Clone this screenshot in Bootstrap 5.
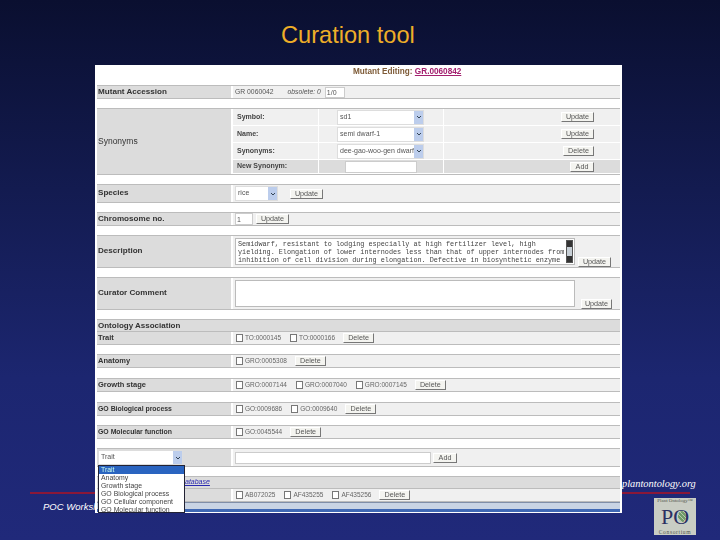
<!DOCTYPE html>
<html lang="en"><head><meta charset="utf-8"><title>Curation tool</title>
<link href="https://cdn.jsdelivr.net/npm/bootstrap@5.3.0/dist/css/bootstrap.min.css" rel="stylesheet">
<style>
html,body{margin:0;width:720px;height:540px;overflow:hidden;background:#1f2a78}
.slide{position:relative;width:720px;height:540px;background:linear-gradient(180deg,#0a0f30 0%,#131b50 35%,#1c2670 70%,#20297a 100%);font-family:"Liberation Sans",Arial,sans-serif;overflow:hidden}
.slide-title{height:65px;margin:0;padding:21px 0 0 281px;font-size:23.6px;line-height:28px;font-weight:400;color:#eeae28;font-family:"Liberation Sans",Arial,sans-serif}
.red-rule{position:absolute;left:30px;top:492px;width:660px;height:2px;background:#8a1838}
.poc{position:absolute;left:43px;top:501px;font:italic 9.5px/12px "Liberation Sans",sans-serif;color:#fff}
.site{position:absolute;left:622px;top:477px;font:italic 10.4px/13px "Liberation Serif",serif;color:#fff}
.po-logo{position:absolute;left:654px;top:498px;width:42px;height:37px;background:#c9cdc4;color:#2a2f62;text-align:center;font-family:"Liberation Serif",serif;overflow:hidden;display:flex;flex-direction:column;justify-content:space-between}
.po-top,.po-bot{line-height:6px;color:#55584f;white-space:nowrap}
.po-top{font-size:5px}
.po-bot{font-size:5.6px;letter-spacing:.6px}
.po-big{font-size:22px;line-height:25px;font-weight:400;position:relative}
.po-leaf{position:absolute;left:24px;top:7px;width:8px;height:11px;border-radius:50%;background:repeating-linear-gradient(45deg,#6f9a68 0 2px,#b7c9ac 2px 3px)}
.shot{position:relative;width:527px;height:448px;margin-left:95px;background:#fff;font-size:8px;color:#444;filter:blur(.42px);padding:0 2px}
.shot-head{height:20px;padding:1px 0 0 256px;font-weight:700;font-size:8.2px;line-height:12px;color:#7d5a36;white-space:nowrap}
.shot-head a{color:#a3206f}
.tr{display:flex;border-top:1px solid #bcbcbc;border-bottom:1px solid #bcbcbc;background:#f0f0f0}
.th{width:136px;flex:none;background:#dcdcdc;padding-left:1px;display:flex;align-items:center;color:#333;border-right:2px solid #fff}
.th-lg{font-size:8.1px;font-weight:700}
.th-syn{font-size:8.5px;font-weight:400}
.th-sm{font-size:7.5px;font-weight:700}
.th-go{font-size:6.9px;font-weight:700}
.td{flex:1;display:flex;align-items:center;min-width:0;white-space:nowrap;padding-left:2px;font-size:6.8px;color:#555}
.gap-row{background:#fff}
.h10{height:10px}.h9{height:9px}
.r14{height:14px}.r18{height:19px}.r31{height:33px}.r66{height:67px}
.full-head{height:12px;background:#dcdcdc;border-top:1px solid #bcbcbc;display:flex;align-items:center;padding-left:1px;font-size:8px;font-weight:700;color:#333;white-space:nowrap}
.full-head a{margin-left:87px;color:#2a2ab0;font-size:7px;font-weight:400;font-style:italic}
.fake-btn{appearance:none;padding:0;height:10px;line-height:8px;font-size:7.2px;font-family:inherit;color:#555;background:#f4f4f0;border:1px solid;border-color:#fff #777 #777 #fff;border-radius:0;flex:none}
.w33{width:33px}.w31{width:31px}.w24{width:24px}
.cb{appearance:none;width:7px;height:8px;margin:0 2px 0 1px;border:1px solid #777;background:#fff;flex:none}
.term{margin-right:8px;font-size:6.5px;color:#666}
.syn-grid{flex:1;display:grid;grid-template-columns:85px 125px 1fr;grid-template-rows:17px 17px 17px 14px;background:#f0f0f0}
.syn-grid>div{display:flex;align-items:center;border-bottom:1px solid #fff;min-width:0}
.syn-l{padding-left:4px;font-weight:700;font-size:7px;color:#444}
.syn-s{padding-left:18px;border-left:1px solid #fff}
.syn-b{justify-content:flex-end;padding-right:26px;border-left:1px solid #fff}
.grey-cell{background:#dcdcdc}
.dd{display:flex;height:15px;background:#fff;border:1px solid #ddd;font-size:7px;color:#555;padding-left:2px;align-items:center;overflow:hidden;flex:none}
.dd span:first-child{flex:1;overflow:hidden;white-space:nowrap}
.dd-arrow{width:9px;height:100%;background:#bccdec;flex:none;display:flex;align-items:center;justify-content:center}
.w87{width:87px}.w43{width:43px}.w85{width:85px}
.txt{appearance:none;height:12px;border:1px solid #ccc;background:#fff;padding:0 1px;font-size:7px;color:#555;border-radius:0;font-family:inherit;flex:none}
.txt-mini{height:11px}
.w72{width:72px}.w18{width:18px}.w20{width:20px}.w196{width:196px}
.area{width:340px;height:27px;flex:none;background:#fff;border:1px solid #bbb;font:6.8px/8.2px "Liberation Mono",monospace;color:#444;padding:1px 9px 0 2px;position:relative;white-space:nowrap;overflow:hidden}
.sbar{position:absolute;right:1px;top:1px;width:7px;bottom:1px;background:#c7cfd6;border:1px solid #555}
.sbar:before,.sbar:after{content:"";position:absolute;left:0;right:0;height:6px;background:#333}
.sbar:before{top:0}.sbar:after{bottom:0}
.btn-low{align-self:flex-end;margin:0 0 0 3px}
.under{height:7px;background:#c9d4e4;border-top:1px solid #7f8ea8}
.under-2{height:3px;background:#3f68b4}
.ddlist{position:absolute;left:3px;top:400px;width:87px;height:48px;background:#fff;border:1px solid #223;font-size:6.9px;line-height:8.1px;color:#444;overflow:hidden;white-space:nowrap}
.ddlist div{padding-left:2px}
.ddlist .sel{background:#2a64c0;color:#cfe}
.ms4{margin-left:4px}.ms6{margin-left:6px}.ms8{margin-left:8px}.ms12{margin-left:12px}.ms14{margin-left:14px}.ms3px{margin-left:3px}.ms2px{margin-left:2px}
</style></head><body>
<div class="slide">
<div class="red-rule"></div>
<div class="poc">POC Worksh</div>
<div class="site">plantontology.org</div>
<div class="po-logo"><div class="po-top">Plant Ontology™</div><div class="po-big">PO<span class="po-leaf"></span></div><div class="po-bot">Consortium</div></div>
<h1 class="slide-title">Curation tool</h1>
<div class="shot">
<div class="shot-head">Mutant Editing: <a href="#">GR.0060842</a></div>
<div class="tr r14"><div class="th th-lg">Mutant Accession</div><div class="td">GR 0060042<i class="ms14">obsolete: 0</i><input class="txt txt-mini w20 ms4" value="1/0"></div></div>
<div class="gap-row h9"></div>
<div class="tr r66"><div class="th th-syn">Synonyms</div>
<div class="syn-grid">
<div class="syn-l">Symbol:</div><div class="syn-s"><div class="dd w87"><span>sd1</span><span class="dd-arrow"><svg width="6" height="4" viewBox="0 0 6 4"><path d="M1 1l2 2 2-2" fill="none" stroke="#345" stroke-width="1"/></svg></span></div></div><div class="syn-b"><button class="fake-btn w33">Update</button></div>
<div class="syn-l">Name:</div><div class="syn-s"><div class="dd w87"><span>semi dwarf-1</span><span class="dd-arrow"><svg width="6" height="4" viewBox="0 0 6 4"><path d="M1 1l2 2 2-2" fill="none" stroke="#345" stroke-width="1"/></svg></span></div></div><div class="syn-b"><button class="fake-btn w33">Update</button></div>
<div class="syn-l">Synonyms:</div><div class="syn-s"><div class="dd w87"><span>dee-gao-woo-gen dwarf</span><span class="dd-arrow"><svg width="6" height="4" viewBox="0 0 6 4"><path d="M1 1l2 2 2-2" fill="none" stroke="#345" stroke-width="1"/></svg></span></div></div><div class="syn-b"><button class="fake-btn w31">Delete</button></div>
<div class="syn-l grey-cell">New Synonym:</div><div class="syn-s grey-cell"><input class="txt w72 ms8"></div><div class="syn-b grey-cell"><button class="fake-btn w24">Add</button></div>
</div></div>
<div class="gap-row h9"></div>
<div class="tr r18"><div class="th th-lg">Species</div><div class="td"><div class="dd w43"><span>rice</span><span class="dd-arrow"><svg width="6" height="4" viewBox="0 0 6 4"><path d="M1 1l2 2 2-2" fill="none" stroke="#345" stroke-width="1"/></svg></span></div><button class="fake-btn w33 ms12">Update</button></div></div>
<div class="gap-row h9"></div>
<div class="tr r14"><div class="th th-lg">Chromosome no.</div><div class="td"><input class="txt w18" value="1"><button class="fake-btn w33 ms3px">Update</button></div></div>
<div class="gap-row h9"></div>
<div class="tr r31"><div class="th th-lg">Description</div><div class="td"><div class="area">Semidwarf, resistant to lodging especially at high fertilizer level, high<br>yielding. Elongation of lower internodes less than that of upper internodes from<br>inhibition of cell division during elongation. Defective in biosynthetic enzyme<span class="sbar"></span></div><button class="fake-btn w33 btn-low">Update</button></div></div>
<div class="gap-row h9"></div>
<div class="tr r31"><div class="th th-lg">Curator Comment</div><div class="td"><div class="area"></div><button class="fake-btn w31 btn-low ms6">Update</button></div></div>
<div class="gap-row h9"></div>
<div class="full-head">Ontology Association</div>
<div class="tr r14"><div class="th th-sm">Trait</div><div class="td"><input type="checkbox" class="cb"><span class="term">TO:0000145</span><input type="checkbox" class="cb"><span class="term">TO:0000166</span><button class="fake-btn w31">Delete</button></div></div>
<div class="gap-row h9"></div>
<div class="tr r14"><div class="th th-sm">Anatomy</div><div class="td"><input type="checkbox" class="cb"><span class="term">GRO:0005308</span><button class="fake-btn w31">Delete</button></div></div>
<div class="gap-row h10"></div>
<div class="tr r14"><div class="th th-sm">Growth stage</div><div class="td"><input type="checkbox" class="cb"><span class="term">GRO:0007144</span><input type="checkbox" class="cb"><span class="term">GRO:0007040</span><input type="checkbox" class="cb"><span class="term">GRO:0007145</span><button class="fake-btn w31">Delete</button></div></div>
<div class="gap-row h10"></div>
<div class="tr r14"><div class="th th-go">GO Biological process</div><div class="td"><input type="checkbox" class="cb"><span class="term">GO:0009686</span><input type="checkbox" class="cb"><span class="term">GO:0009640</span><button class="fake-btn w31">Delete</button></div></div>
<div class="gap-row h9"></div>
<div class="tr r14"><div class="th th-go">GO Molecular function</div><div class="td"><input type="checkbox" class="cb"><span class="term">GO:0045544</span><button class="fake-btn w31">Delete</button></div></div>
<div class="gap-row h9"></div>
<div class="tr r18"><div class="th"><div class="dd w85"><span>Trait</span><span class="dd-arrow"><svg width="6" height="4" viewBox="0 0 6 4"><path d="M1 1l2 2 2-2" fill="none" stroke="#345" stroke-width="1"/></svg></span></div></div><div class="td"><input class="txt w196"><button class="fake-btn w24 ms2px">Add</button></div></div>
<div class="gap-row h9"></div>
<div class="full-head"><a href="#">atabase</a></div>
<div class="tr r14"><div class="th th-sm"></div><div class="td"><input type="checkbox" class="cb"><span class="term">AB072025</span><input type="checkbox" class="cb"><span class="term">AF435255</span><input type="checkbox" class="cb"><span class="term">AF435256</span><button class="fake-btn w31">Delete</button></div></div>
<div class="under"></div>
<div class="under-2"></div>
<div class="ddlist"><div class="sel">Trait</div><div>Anatomy</div><div>Growth stage</div><div>GO Biological process</div><div>GO Cellular component</div><div>GO Molecular function</div></div>
</div>
</div>
<script src="https://cdn.jsdelivr.net/npm/bootstrap@5.3.0/dist/js/bootstrap.bundle.min.js"></script>
</body></html>
